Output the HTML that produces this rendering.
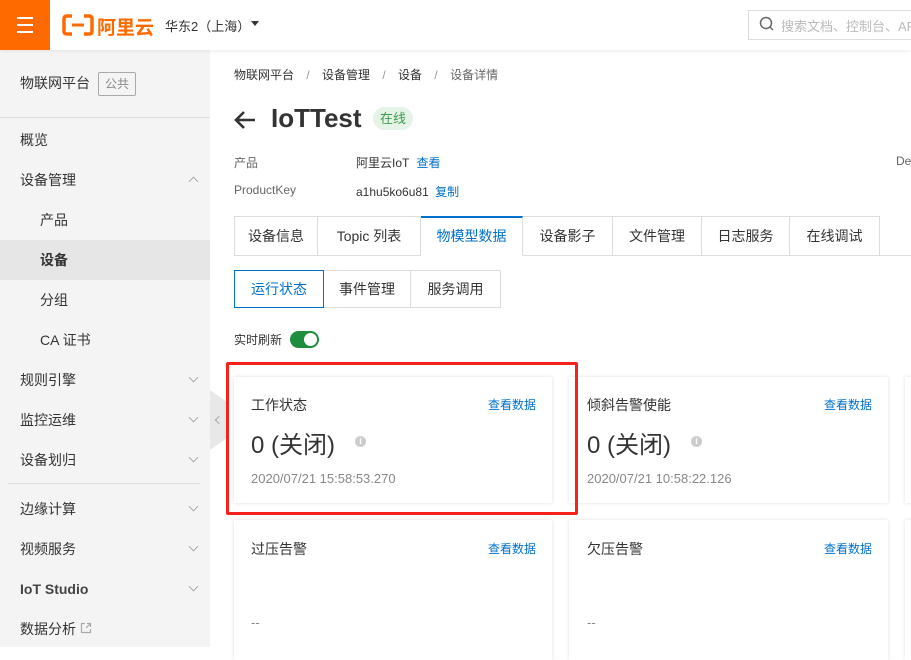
<!DOCTYPE html>
<html><head><meta charset="utf-8">
<style>
*{box-sizing:border-box;margin:0;padding:0}
body{width:911px;height:647px;overflow:hidden;background:#fff;font-family:"Liberation Sans","Noto Sans CJK SC",sans-serif;color:#333;font-size:13px;position:relative}
.a{position:absolute;white-space:nowrap}
.hdr{left:0;top:0;width:911px;height:50px;background:#fff;box-shadow:0 1px 4px rgba(0,0,0,.08);z-index:5}
.side{left:0;top:50px;width:210px;height:597px;background:#f4f4f4}
.nav{left:20px;font-size:14px;color:#333;line-height:20px}
.chev{left:190px;width:7px;height:7px;border-right:1.3px solid #aaa;border-bottom:1.3px solid #aaa}
.blue{color:#0070cc}
.tab{top:216px;height:40px;border:1px solid #ddd;border-left:none;font-size:14px;line-height:38px;text-align:center;color:#333;background:#fff}
.sub{top:270px;height:38px;border:1px solid #ddd;border-left:none;font-size:14px;line-height:36px;text-align:center;color:#333}
.card{background:#fff;box-shadow:0 0 4px rgba(0,0,0,.12);}
.ct{font-size:14px;color:#333}
.cl{font-size:12px;color:#0070cc}
.cv{font-size:24px;color:#333}
.cd{font-size:13px;color:#888}
.info{width:11px;height:11px;border-radius:50%;background:#ccc;color:#fff;font-size:9px;text-align:center;line-height:11px;font-weight:bold}
</style></head><body>
<div class="a hdr">
 <div class="a" style="left:0;top:0;width:50px;height:50px;background:#ff6a00">
  <div class="a" style="left:17px;top:17px;width:16px;height:2px;background:#fff"></div>
  <div class="a" style="left:17px;top:24px;width:16px;height:2px;background:#fff"></div>
  <div class="a" style="left:17px;top:31px;width:16px;height:2px;background:#fff"></div>
 </div>
 <svg class="a" style="left:62px;top:14px" width="32" height="22" viewBox="0 0 32 22"><path d="M10 2H5Q2 2 2 5V17Q2 20 5 20H10M22 2H27Q30 2 30 5V17Q30 20 27 20H22" fill="none" stroke="#ff6a00" stroke-width="3.5"/><rect x="10" y="9.5" width="12" height="3" fill="#ff6a00"/></svg>
 <div class="a" style="left:97px;top:13px;font-size:19px;font-weight:bold;color:#ff6a00">阿里云</div>
 <div class="a" style="left:165px;top:16px;font-size:13px;color:#333">华东2（上海）</div>
 <div class="a" style="left:251px;top:21px;width:0;height:0;border-left:4px solid transparent;border-right:4px solid transparent;border-top:5px solid #333"></div>
 <div class="a" style="left:748px;top:10px;width:170px;height:30px;border:1px solid #ddd"></div>
 <svg class="a" style="left:759px;top:16px" width="16" height="16"><circle cx="7" cy="7" r="5.5" fill="none" stroke="#666" stroke-width="1.5"/><path d="M11 11L14 14" stroke="#666" stroke-width="1.5"/></svg>
 <div class="a" style="left:781px;top:16px;font-size:13px;color:#bbb">搜索文档、控制台、API、</div>
</div>
<div class="a side"></div>
<div class="a nav" style="top:73px">物联网平台</div>
<div class="a" style="left:98px;top:72px;width:38px;height:24px;border:1px solid #aaa;border-radius:2px;font-size:12px;color:#888;text-align:center;line-height:22px">公共</div>
<div class="a" style="left:0;top:117px;width:210px;height:1px;background:#ddd"></div>
<div class="a nav" style="top:130px">概览</div>
<div class="a nav" style="top:170px">设备管理</div>
<div class="a" style="left:190px;top:178px;width:7px;height:7px;border-left:1.3px solid #aaa;border-top:1.3px solid #aaa;transform:rotate(45deg)"></div>
<div class="a nav" style="top:210px;left:40px">产品</div>
<div class="a" style="left:0;top:240px;width:210px;height:40px;background:#e6e6e6"></div>
<div class="a nav" style="top:250px;left:40px;font-weight:bold">设备</div>
<div class="a nav" style="top:290px;left:40px">分组</div>
<div class="a nav" style="top:330px;left:40px">CA 证书</div>
<div class="a nav" style="top:370px">规则引擎</div><div class="a chev" style="top:374px;transform:rotate(45deg)"></div>
<div class="a nav" style="top:410px">监控运维</div><div class="a chev" style="top:414px;transform:rotate(45deg)"></div>
<div class="a nav" style="top:450px">设备划归</div><div class="a chev" style="top:454px;transform:rotate(45deg)"></div>
<div class="a" style="left:8px;top:483px;width:192px;height:1px;background:#ddd"></div>
<div class="a nav" style="top:499px">边缘计算</div><div class="a chev" style="top:503px;transform:rotate(45deg)"></div>
<div class="a nav" style="top:539px">视频服务</div><div class="a chev" style="top:543px;transform:rotate(45deg)"></div>
<div class="a nav" style="top:579px;font-weight:bold;color:#444">IoT Studio</div><div class="a chev" style="top:583px;transform:rotate(45deg)"></div>
<div class="a nav" style="top:619px">数据分析</div>
<svg class="a" style="left:80px;top:622px" width="12" height="12"><path d="M5 1.5H1.5V10.5H10.5V7M7 1.5H10.5V5M10.5 1.5L6 6" fill="none" stroke="#aaa" stroke-width="1.2"/></svg>
<div class="a" style="left:210px;top:390px;width:17px;height:60px;background:#e8e8e8;clip-path:polygon(0 0,100% 20%,100% 80%,0 100%)"></div>
<div class="a" style="left:216px;top:417px;width:6px;height:6px;border-left:1.3px solid #aaa;border-bottom:1.3px solid #aaa;transform:rotate(45deg)"></div>

<div class="a" style="left:234px;top:66px;font-size:12px;color:#333">物联网平台 <span style="color:#999;margin:0 9px">/</span> 设备管理 <span style="color:#999;margin:0 9px">/</span> 设备 <span style="color:#999;margin:0 9px">/</span> <span style="color:#666">设备详情</span></div>
<svg class="a" style="left:233px;top:110px" width="24" height="20"><path d="M22 10H3M11 2L3 10L11 18" fill="none" stroke="#333" stroke-width="2.6"/></svg>
<div class="a" style="left:271px;top:103px;font-size:26px;font-weight:bold;color:#333">IoTTest</div>
<div class="a" style="left:373px;top:107px;width:40px;height:23px;border-radius:12px;background:#e6f4e8;color:#3c9a4b;font-size:13px;text-align:center;line-height:23px">在线</div>
<div class="a" style="left:234px;top:154px;font-size:12px;color:#666">产品</div>
<div class="a" style="left:356px;top:154px;font-size:12px;color:#333">阿里云IoT <span class="blue" style="margin-left:4px">查看</span></div>
<div class="a" style="left:234px;top:183px;font-size:12px;color:#666">ProductKey</div>
<div class="a" style="left:356px;top:183px;font-size:12px;color:#333">a1hu5ko6u81 <span class="blue" style="margin-left:3px">复制</span></div>
<div class="a" style="left:896px;top:154px;font-size:12px;color:#666">De</div>

<div class="a" style="left:234px;top:255px;width:677px;height:1px;background:#ddd"></div>
<div class="a tab" style="left:234px;width:84px;border-left:1px solid #ddd">设备信息</div>
<div class="a tab" style="left:318px;width:103px">Topic 列表</div>
<div class="a tab" style="left:421px;width:102px;border-top:2px solid #0070cc;border-bottom-color:#fff;color:#0070cc;line-height:36px">物模型数据</div>
<div class="a tab" style="left:523px;width:90px">设备影子</div>
<div class="a tab" style="left:613px;width:89px">文件管理</div>
<div class="a tab" style="left:702px;width:88px">日志服务</div>
<div class="a tab" style="left:790px;width:90px">在线调试</div>

<div class="a sub" style="left:234px;width:90px;border:1px solid #0070cc;color:#0070cc">运行状态</div>
<div class="a sub" style="left:324px;width:87px">事件管理</div>
<div class="a sub" style="left:411px;width:90px">服务调用</div>

<div class="a" style="left:234px;top:331px;font-size:12px;color:#333">实时刷新</div>
<div class="a" style="left:290px;top:331px;width:29px;height:17px;border-radius:9px;background:#1e8e3e"></div>
<div class="a" style="left:304px;top:333px;width:13px;height:13px;border-radius:50%;background:#fff"></div>

<div class="a card" style="left:234px;top:377px;width:318px;height:126px"></div>
<div class="a card" style="left:569px;top:377px;width:319px;height:126px"></div>
<div class="a card" style="left:905px;top:377px;width:20px;height:126px"></div>
<div class="a card" style="left:234px;top:520px;width:318px;height:140px"></div>
<div class="a card" style="left:569px;top:520px;width:319px;height:140px"></div>
<div class="a card" style="left:905px;top:520px;width:20px;height:140px"></div>
<div class="a" style="left:226px;top:362px;width:352px;height:153px;border:3px solid #f5221b;border-radius:2px"></div>

<div class="a ct" style="left:251px;top:395px">工作状态</div>
<div class="a cl" style="left:488px;top:396px">查看数据</div>
<div class="a cv" style="left:251px;top:425px">0 (关闭)</div>
<div class="a info" style="left:355px;top:436px">i</div>
<div class="a cd" style="left:251px;top:471px">2020/07/21 15:58:53.270</div>

<div class="a ct" style="left:587px;top:395px">倾斜告警使能</div>
<div class="a cl" style="left:824px;top:396px">查看数据</div>
<div class="a cv" style="left:587px;top:425px">0 (关闭)</div>
<div class="a info" style="left:691px;top:436px">i</div>
<div class="a cd" style="left:587px;top:471px">2020/07/21 10:58:22.126</div>

<div class="a ct" style="left:251px;top:539px">过压告警</div>
<div class="a cl" style="left:488px;top:540px">查看数据</div>
<div class="a cd" style="left:251px;top:615px">--</div>
<div class="a ct" style="left:587px;top:539px">欠压告警</div>
<div class="a cl" style="left:824px;top:540px">查看数据</div>
<div class="a cd" style="left:587px;top:615px">--</div>
</body></html>
